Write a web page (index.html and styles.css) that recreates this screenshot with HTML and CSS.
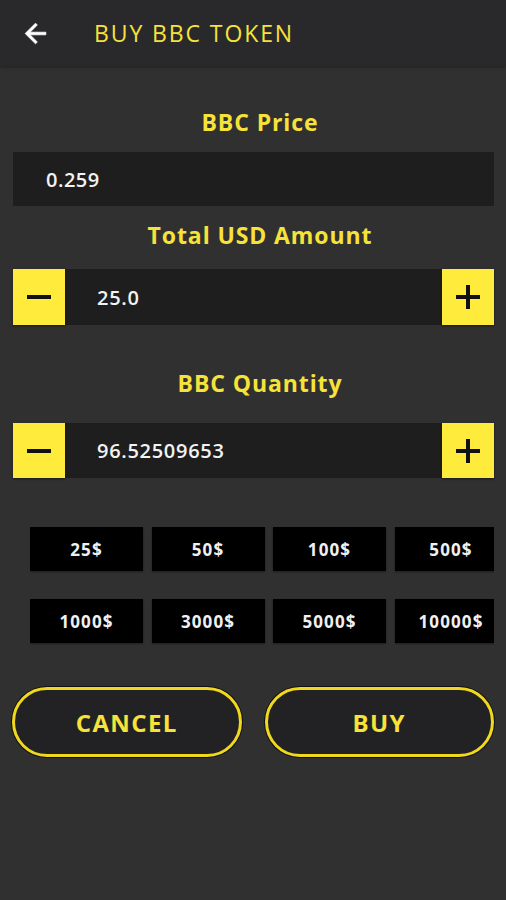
FILE: index.html
```html
<!DOCTYPE html>
<html>
<head>
<meta charset="utf-8">
<link rel="stylesheet" href="styles.css">
</head>
<body>
<header class="appbar">
  <svg class="back" width="31" height="31" viewBox="0 0 24 24"><path d="M20 11H7.83l5.59-5.59L12 4l-8 8 8 8 1.41-1.41L7.83 13H20v-2z" fill="#fff" stroke="#fff" stroke-width="0.6"/></svg>
  <h1 class="title">BUY BBC TOKEN</h1>
</header>
<main class="content">
  <div class="label l-price">BBC Price</div>
  <div class="field">0.259</div>
  <div class="label l-usd">Total USD Amount</div>
  <div class="stepper s-usd">
    <button class="step"><svg width="26" height="26" viewBox="0 0 26 26"><rect x="1" y="11" width="24" height="4" fill="#111"/></svg></button>
    <div class="value">25.0</div>
    <button class="step"><svg width="26" height="26" viewBox="0 0 26 26"><rect x="1" y="11" width="24" height="4" fill="#111"/><rect x="11" y="1" width="4" height="24" fill="#111"/></svg></button>
  </div>
  <div class="label l-qty">BBC Quantity</div>
  <div class="stepper s-qty">
    <button class="step"><svg width="26" height="26" viewBox="0 0 26 26"><rect x="1" y="11" width="24" height="4" fill="#111"/></svg></button>
    <div class="value">96.52509653</div>
    <button class="step"><svg width="26" height="26" viewBox="0 0 26 26"><rect x="1" y="11" width="24" height="4" fill="#111"/><rect x="11" y="1" width="4" height="24" fill="#111"/></svg></button>
  </div>
  <div class="presets">
    <div class="preset">25$</div>
    <div class="preset">50$</div>
    <div class="preset">100$</div>
    <div class="preset">500$</div>
    <div class="preset">1000$</div>
    <div class="preset">3000$</div>
    <div class="preset">5000$</div>
    <div class="preset">10000$</div>
  </div>
  <div class="actions">
    <button class="pill">CANCEL</button>
    <button class="pill">BUY</button>
  </div>
</main>
</body>
</html>
```
FILE: styles.css
```css
html, body {
  margin: 0;
  padding: 0;
}
body {
  background: #303030;
  width: 506px;
  height: 900px;
  font-family: "Open Sans", "Lato", sans-serif;
  overflow: hidden;
}
.appbar {
  height: 66px;
  background: #29292b;
  display: flex;
  align-items: center;
  box-shadow: 0 1px 3px rgba(0,0,0,0.35);
}
.back {
  margin-left: 20px;
}
.title {
  margin: 0 0 0 43px;
  font-size: 23px;
  font-weight: 400;
  letter-spacing: 1.9px;
  color: #f7e23a;
}
.content {
  padding: 0 12px 0 13px;
  display: flex;
  flex-direction: column;
}
.label {
  text-align: center;
  color: #f7e23a;
  font-weight: 700;
  font-size: 23px;
  letter-spacing: 0.9px;
  line-height: 30px;
  height: 30px;
  padding-left: 13px;
}
.l-price { margin-top: 41px; }
.l-usd { margin-top: 14px; }
.l-qty { margin-top: 43px; }
.field {
  margin-top: 15px;
  height: 54px;
  background: #1e1e1f;
  color: #f2f2f2;
  font-size: 20px;
  font-weight: 600;
  letter-spacing: 0.5px;
  display: flex;
  align-items: center;
  padding-left: 33px;
}
.stepper {
  display: flex;
  height: 56px;
  background: #1e1e1f;
}
.s-usd { margin-top: 19px; }
.s-qty { margin-top: 25px; height: 55px; }
.step {
  width: 52px;
  border: none;
  padding: 0;
  background: #ffeb3b;
  display: flex;
  align-items: center;
  justify-content: center;
  box-shadow: 0 1px 2px rgba(0,0,0,0.5);
}
.value {
  flex: 1;
  display: flex;
  align-items: center;
  padding-left: 32px;
  color: #f2f2f2;
  font-size: 20px;
  font-weight: 600;
  letter-spacing: 0.7px;
}
.presets {
  margin: 49px 0 0 17px;
  display: grid;
  grid-template-columns: repeat(4, 113px);
  grid-auto-rows: 44px;
  column-gap: 8.5px;
  row-gap: 28px;
  overflow: hidden;
  padding-bottom: 2px;
}
.preset {
  background: #000;
  color: #f0f0f0;
  font-weight: 700;
  font-size: 17px;
  letter-spacing: 1.1px;
  display: flex;
  align-items: center;
  justify-content: center;
  box-shadow: 0 1px 2px rgba(0,0,0,0.4);
}
.actions {
  margin: 42px 0 0 -1px;
  display: flex;
  gap: 23px;
}
.pill {
  width: 231px;
  height: 70px;
  box-sizing: border-box;
  border: 3px solid #f0d81e;
  border-radius: 35px;
  background: #222224;
  color: #f7e23a;
  font-family: "Open Sans", "Lato", sans-serif;
  font-weight: 700;
  font-size: 24px;
  letter-spacing: 1.4px;
  box-shadow: 0 0 0 1px #111;
}
```
